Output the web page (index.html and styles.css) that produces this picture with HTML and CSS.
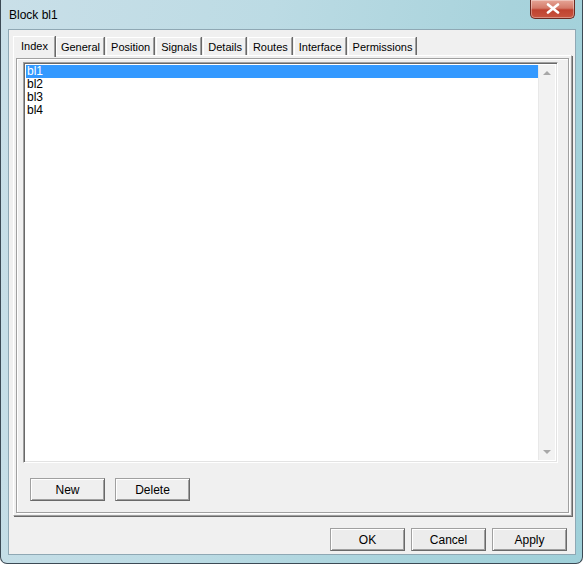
FILE: index.html
```html
<!DOCTYPE html>
<html>
<head>
<meta charset="utf-8">
<link rel="stylesheet" href="styles.css">
</head>
<body>
<div class="window">
  <div class="titlebar">
    <span class="title">Block bl1</span>
    <div class="close"><svg width="14" height="11" viewBox="0 0 14 11"><path d="M2 1.5 L12 9.5 M12 1.5 L2 9.5" stroke="#ffffff" stroke-width="2.6" stroke-linecap="round"/></svg></div>
  </div>
  <div class="client">
    <div class="tabs">
      <div class="tab active">Index</div>
      <div class="tab">General</div>
      <div class="tab">Position</div>
      <div class="tab">Signals</div>
      <div class="tab">Details</div>
      <div class="tab">Routes</div>
      <div class="tab">Interface</div>
      <div class="tab">Permissions</div>
    </div>
    <div class="pane">
      <div class="inner">
        <div class="listbox">
          <div class="items">
            <div class="item sel">bl1</div>
            <div class="item">bl2</div>
            <div class="item">bl3</div>
            <div class="item">bl4</div>
          </div>
          <div class="scrollbar">
            <div class="arrow up"></div>
            <div class="arrow down"></div>
          </div>
        </div>
        <div class="btnrow">
          <div class="btn">New</div>
          <div class="btn">Delete</div>
        </div>
      </div>
    </div>
    <div class="footer">
      <div class="btn">OK</div>
      <div class="btn">Cancel</div>
      <div class="btn">Apply</div>
    </div>
  </div>
</div>
</body>
</html>
```

FILE: styles.css
```css
html, body {
  margin: 0;
  padding: 0;
}
body {
  width: 583px;
  height: 564px;
  overflow: hidden;
  font-family: "Liberation Sans", Arial, sans-serif;
  font-size: 12px;
  color: #000;
}
.window {
  box-sizing: border-box;
  width: 583px;
  height: 564px;
  background: linear-gradient(100deg, #c9dfe8 0%, #bcdbe4 40%, #a8d3dc 75%, #9fd0d9 100%);
  border: 1px solid #3c4a55;
  border-top: none;
  border-radius: 0 0 7px 7px;
  padding: 0 6px 0 7px;
  display: flex;
  flex-direction: column;
}
.titlebar {
  height: 29px;
  display: flex;
  align-items: flex-start;
  justify-content: space-between;
}
.title {
  margin-top: 8px;
  margin-left: 1px;
  font-size: 12px;
  color: #000;
}
.close {
  width: 45px;
  height: 19px;
  box-sizing: border-box;
  margin-right: 1px;
  border: 1px solid #6b2a22;
  border-top: none;
  border-radius: 0 0 5px 5px;
  background: linear-gradient(180deg, #e6a597 0%, #d47a69 45%, #bf4230 55%, #c8553f 100%);
  box-shadow: inset 0 0 0 1px rgba(255,255,255,0.35);
  display: flex;
  align-items: center;
  justify-content: center;
}
.close svg { margin-top: -1px; }
.client {
  height: 526px;
  box-sizing: border-box;
  background: #f0f0f0;
  border: 1px solid #8fa8b4;
  padding: 6px 2px 0 4px;
  display: flex;
  flex-direction: column;
}
.tabs {
  display: flex;
  align-items: flex-end;
  height: 19px;
  padding-left: 1px;
  position: relative;
  z-index: 1;
  font-size: 11px;
}
.tab {
  box-sizing: border-box;
  height: 18px;
  padding: 2px 3px 0 4px;
  margin-right: 2px;
  background: #f0f0f0;
  border: 1px solid #a0a0a0;
  border-bottom: none;
  border-left-color: #ffffff;
  border-top-color: #ffffff;
  box-shadow: 1px 0 0 #696969;
  white-space: nowrap;
  line-height: 14px;
}
.tab.active {
  height: 21px;
  margin-bottom: -2px;
  padding: 2px 6px 0 7px;
  margin-left: -1px;
  margin-right: 1px;
}
.pane {
  box-sizing: border-box;
  height: 461px;
  margin-right: 1px;
  border: 1px solid #a0a0a0;
  border-top-color: #ffffff;
  border-left-color: #ffffff;
  box-shadow: 1px 1px 0 #696969;
  padding: 2px 2px 2px 2px;
}
.inner {
  box-sizing: border-box;
  height: 100%;
  border: 1px solid #a0a0a0;
  box-shadow: inset 1px 1px 0 #ffffff, 1px 1px 0 #ffffff;
  padding: 3px 10px 0 6px;
  display: flex;
  flex-direction: column;
}
.listbox {
  box-sizing: border-box;
  height: 401px;
  border: 1px solid #a0a0a0;
  border-right-color: #ffffff;
  border-bottom-color: #ffffff;
  box-shadow: inset 1px 1px 0 #696969, inset -1px -1px 0 #e3e3e3;
  background: #ffffff;
  padding: 2px 2px 2px 2px;
  display: flex;
}
.items {
  flex: 1;
  padding-top: 0;
}
.item {
  height: 13px;
  line-height: 13px;
  padding-left: 1px;
}
.item.sel {
  background: #3399ff;
  color: #ffffff;
}
.scrollbar {
  width: 17px;
  background: #f2f2f2;
  border-left: 1px solid #e8e8e8;
  display: flex;
  flex-direction: column;
  justify-content: space-between;
  align-items: center;
  padding: 6px 0 6px 0;
  box-sizing: border-box;
}
.arrow {
  width: 0;
  height: 0;
  border-left: 4px solid transparent;
  border-right: 4px solid transparent;
}
.arrow.up { border-bottom: 4px solid #a8a8a8; }
.arrow.down { border-top: 4px solid #a8a8a8; }
.btnrow {
  display: flex;
  gap: 10px;
  margin-top: 15px;
  padding-left: 7px;
}
.btn {
  box-sizing: border-box;
  width: 75px;
  height: 23px;
  display: flex;
  align-items: center;
  justify-content: center;
  background: #efefef;
  border: 1px solid;
  border-color: #a0a0a0 #696969 #696969 #a0a0a0;
  box-shadow: inset 1px 1px 0 #ffffff, inset -1px -1px 0 #a0a0a0;
}
.footer {
  display: flex;
  justify-content: flex-end;
  gap: 6px;
  margin-top: 12px;
  padding-right: 6px;
}
.footer .btn {
  background: #ececec;
}
```
